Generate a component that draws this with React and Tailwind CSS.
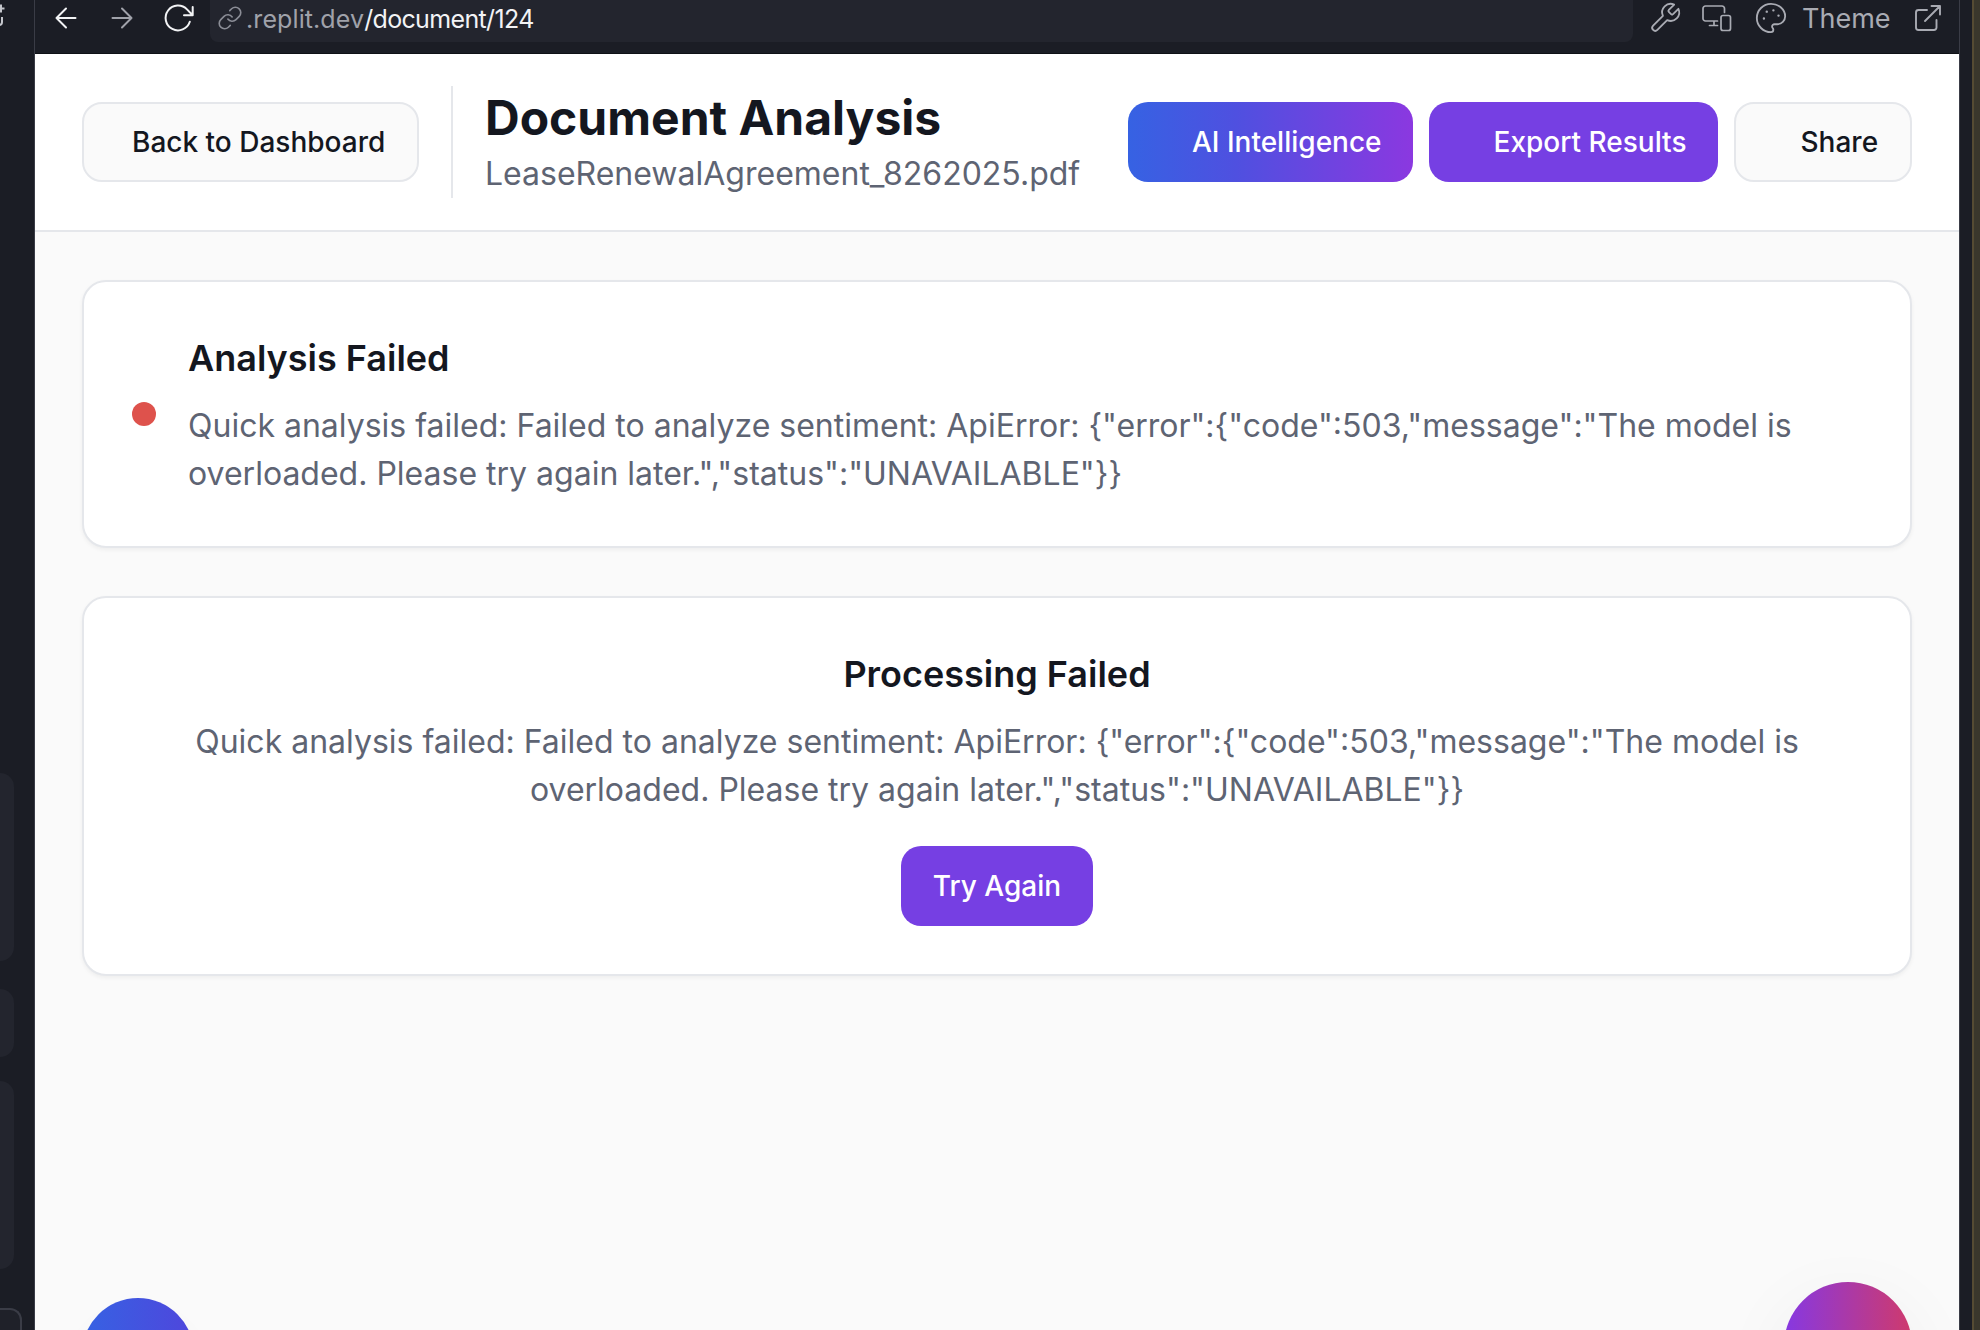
import React from "react";

const stroke = { fill: "none", stroke: "currentColor", strokeLinecap: "round", strokeLinejoin: "round" };

function ToolbarIcons() {
  return (
    <div className="flex h-[36px] items-center text-[#a9abb3]">
      <svg className="ml-[15px] block" width="34" height="34" viewBox="0 0 24 24" strokeWidth="1.3" {...stroke}>
        <path d="M14.700 6.300a1 1 0 0 0 0 1.400l1.600 1.600a1 1 0 0 0 1.400 0l3.770-3.770a6 6 0 0 1-7.940 7.940l-6.910 6.910a2.120 2.120 0 0 1-3-3l6.910-6.910a6 6 0 0 1 7.940-7.940l-3.760 3.760z" />
      </svg>
      <svg className="ml-[18px] block" width="32" height="36" viewBox="0 0 32 36" strokeWidth="1.700" {...stroke}>
        <path d="M24.500 12.500V8.500A2.500 2.500 0 0 0 22 6H5.500A2.500 2.500 0 0 0 3 8.500v10A2.500 2.500 0 0 0 5.500 21H17.500M14 21v4.500M9.500 25.500h8" />
        <rect x="21" y="15.500" width="9.500" height="15" rx="2" />
      </svg>
      <svg className="ml-[22px] block" width="34" height="34" viewBox="0 0 24 24" strokeWidth="1.3" {...stroke}>
        <path d="M12 2a10 10 0 1 0 0 20c.93 0 1.650-.75 1.650-1.690 0-.44-.18-.83-.44-1.120-.29-.29-.44-.65-.44-1.130a1.640 1.640 0 0 1 1.670-1.670h2c3.050 0 5.560-2.500 5.560-5.550C21.970 6.010 17.460 2 12 2z" />
        <g fill="currentColor" strokeWidth="0.9">
          <circle cx="13.700" cy="6.600" r=".4" />
          <circle cx="17.300" cy="10.300" r=".4" />
          <circle cx="9" cy="7.500" r=".4" />
          <circle cx="7" cy="12.300" r=".4" />
        </g>
      </svg>
      <span className="ml-[14px] w-[89px] pt-px text-[27px] leading-[36px]">Theme</span>
      <svg className="ml-[22px] block" width="30" height="36" viewBox="0 0 30 36" strokeWidth="1.900" {...stroke}>
        <path d="M14 10H5.500A2.500 2.500 0 0 0 3 12.500v15A2.500 2.500 0 0 0 5.500 30h15.500a2.500 2.500 0 0 0 2.500-2.500V20M18.500 6h8.500v8.500M27 6 12 21" />
      </svg>
    </div>
  );
}

function Toolbar() {
  return (
    <div className="flex h-[54px] shrink-0 items-start border-b border-[#0f1116] bg-[#1b1d25] text-[#f2f3f5]">
      <div className="flex h-[36px] w-[175px] shrink-0 items-center">
        <svg className="ml-[20px] block" width="22" height="24" viewBox="0 0 22 24" strokeWidth="2" {...stroke}>
          <path d="M20.500 12H1.500M11 2.500 1.500 12l9.500 9.500" />
        </svg>
        <svg className="ml-[34px] block text-[#a0a2aa]" width="22" height="24" viewBox="0 0 22 24" strokeWidth="2" {...stroke}>
          <path d="M1.500 12h19M11 2.500l9.500 9.500-9.500 9.500" />
        </svg>
        <svg className="ml-[30px] block" width="32" height="36" viewBox="0 0 32 36" strokeWidth="2" {...stroke}>
          <path d="M26.800 21.800A12.400 12.400 0 1 1 24 9.400L29.700 15.200M29.700 7v8.200h-8.700" />
        </svg>
      </div>
      <div className="flex h-[42px] min-w-0 flex-1 items-start rounded-b-[8px] bg-[#23252e]">
        <div className="flex h-[36px] items-center">
          <svg className="ml-[7px] block text-[#8b8d96]" width="26" height="26" viewBox="0 0 24 24" strokeWidth="1.500" {...stroke}>
            <path d="M10 13a5 5 0 0 0 7.540.540l3-3a5 5 0 0 0-7.070-7.070l-1.720 1.710" />
            <path d="M14 11a5 5 0 0 0-7.540-.54l-3 3a5 5 0 0 0 7.070 7.070l1.710-1.710" />
          </svg>
          <div className="ml-[3px] flex pt-px text-[25px] leading-[36px] whitespace-nowrap">
            <span className="tracking-[0.1px] text-[#a0a2aa]">.replit.dev</span>
            <span className="tracking-[-0.65px] text-[#f2f3f5]">/document/124</span>
          </div>
        </div>
      </div>
      <ToolbarIcons />
      <div className="w-[16px]" />
    </div>
  );
}

const btn = "flex h-20 items-center rounded-[20px] text-[28px] font-medium leading-10 whitespace-nowrap";
const message =
  'Quick analysis failed: Failed to analyze sentiment: ApiError: {"error":{"code":503,"message":"The model is overloaded. Please try again later.","status":"UNAVAILABLE"}}';

function Header() {
  return (
    <header className="flex h-[178px] shrink-0 items-center justify-between border-b-2 border-[#e5e7eb] bg-white px-[47px] text-[#14171f]">
      <div className="flex items-center">
        <button className={btn + " w-[337px] border-2 border-[#e5e7eb] bg-[#fafafa] pl-12"}>Back to Dashboard</button>
        <div className="ml-8 h-28 w-[2px] bg-[#e5e7eb]" />
        <div className="ml-8">
          <h1 className="text-[48px] font-bold leading-[64px] whitespace-nowrap">Document Analysis</h1>
          <p className="text-[32px] leading-[48px] text-[#5e6473] whitespace-nowrap">LeaseRenewalAgreement_8262025.pdf</p>
        </div>
      </div>
      <div className="flex items-center gap-4">
        <button className={btn + " w-[285px] bg-[linear-gradient(to_right,#3662e3,#4f50e0_38%,#8b38e0)] pl-16 text-white"}>AI Intelligence</button>
        <button className={btn + " w-[289px] bg-[#763fe3] pl-[64.5px] text-white"}>Export Results</button>
        <button className={btn + " w-[178px] border-2 border-[#e5e7eb] bg-[#fafafa] pl-[64.5px]"}>Share</button>
      </div>
    </header>
  );
}

const card = "rounded-[24px] border-2 border-[#e5e7eb] bg-white p-12 shadow-[0_2px_4px_rgba(0,0,0,0.05)]";

export default function App() {
  return (
    <div className="flex h-[1330px] w-[1980px] overflow-hidden bg-[#1b1d25] font-['Inter',sans-serif]">
      <aside className="flex w-[35px] shrink-0 flex-col border-r border-[#3a3c46]">
        <svg className="block" width="8" height="32" viewBox="0 0 8 32" stroke="#c4c6cc" strokeWidth="2" fill="none">
          <path d="M0 8.500h4.500M1 4.500v8M2 17v5q0 3-3 3" />
        </svg>
        <div className="mt-[741px] h-[188px] w-[14px] rounded-r-[16px] bg-[#23252e]" />
        <div className="mt-[28px] h-[68px] w-[14px] rounded-r-[16px] bg-[#23252e]" />
        <div className="mt-[24px] h-[188px] w-[14px] rounded-r-[16px] bg-[#23252e]" />
        <div className="mt-[39px] h-[22px] w-[22px] rounded-tr-[12px] border-t-2 border-r-2 border-[#3a3c46] bg-[#1f2129]" />
      </aside>
      <div className="relative flex w-[1924px] shrink-0 flex-col bg-[#fafafa]">
        <Toolbar />
        <Header />
        <main className="flex flex-col gap-12 px-[47px] pt-12 text-[#14171f]">
          <section className={card + " flex items-center gap-8"}>
            <div className="size-6 shrink-0 rounded-full bg-[#de524c]" />
            <div>
              <h2 className="text-[36px] font-semibold leading-[56px]">Analysis Failed</h2>
              <p className="mt-4 text-[32px] leading-[48px] text-[#5e6473]">{message}</p>
            </div>
          </section>
          <section className={card + " flex flex-col items-center text-center"}>
            <h2 className="text-[36px] font-semibold leading-[56px]">Processing Failed</h2>
            <p className="mt-4 text-[32px] leading-[48px] text-[#5e6473]">{message}</p>
            <button className={btn + " mt-8 w-48 justify-center bg-[#763fe3] text-white"}>Try Again</button>
          </section>
        </main>
        <div className="absolute top-[1298px] left-[47px] size-28 rounded-full bg-[linear-gradient(to_right,#3662e3,#4f46dc)] shadow-[0_20px_30px_-6px_rgba(0,0,0,0.1)]" />
        <div className="absolute top-[1282px] right-[47px] size-32 rounded-full bg-[linear-gradient(to_right,#8638e2,#cf3a6c)] shadow-[0_24px_80px_rgba(0,0,0,0.06)]" />
      </div>
      <div className="w-[13px] shrink-0 border-l border-[#3a3c46]" />
      <div className="flex-1 border-l-2 border-[#554b33] bg-[#3a372c]" />
    </div>
  );
}
